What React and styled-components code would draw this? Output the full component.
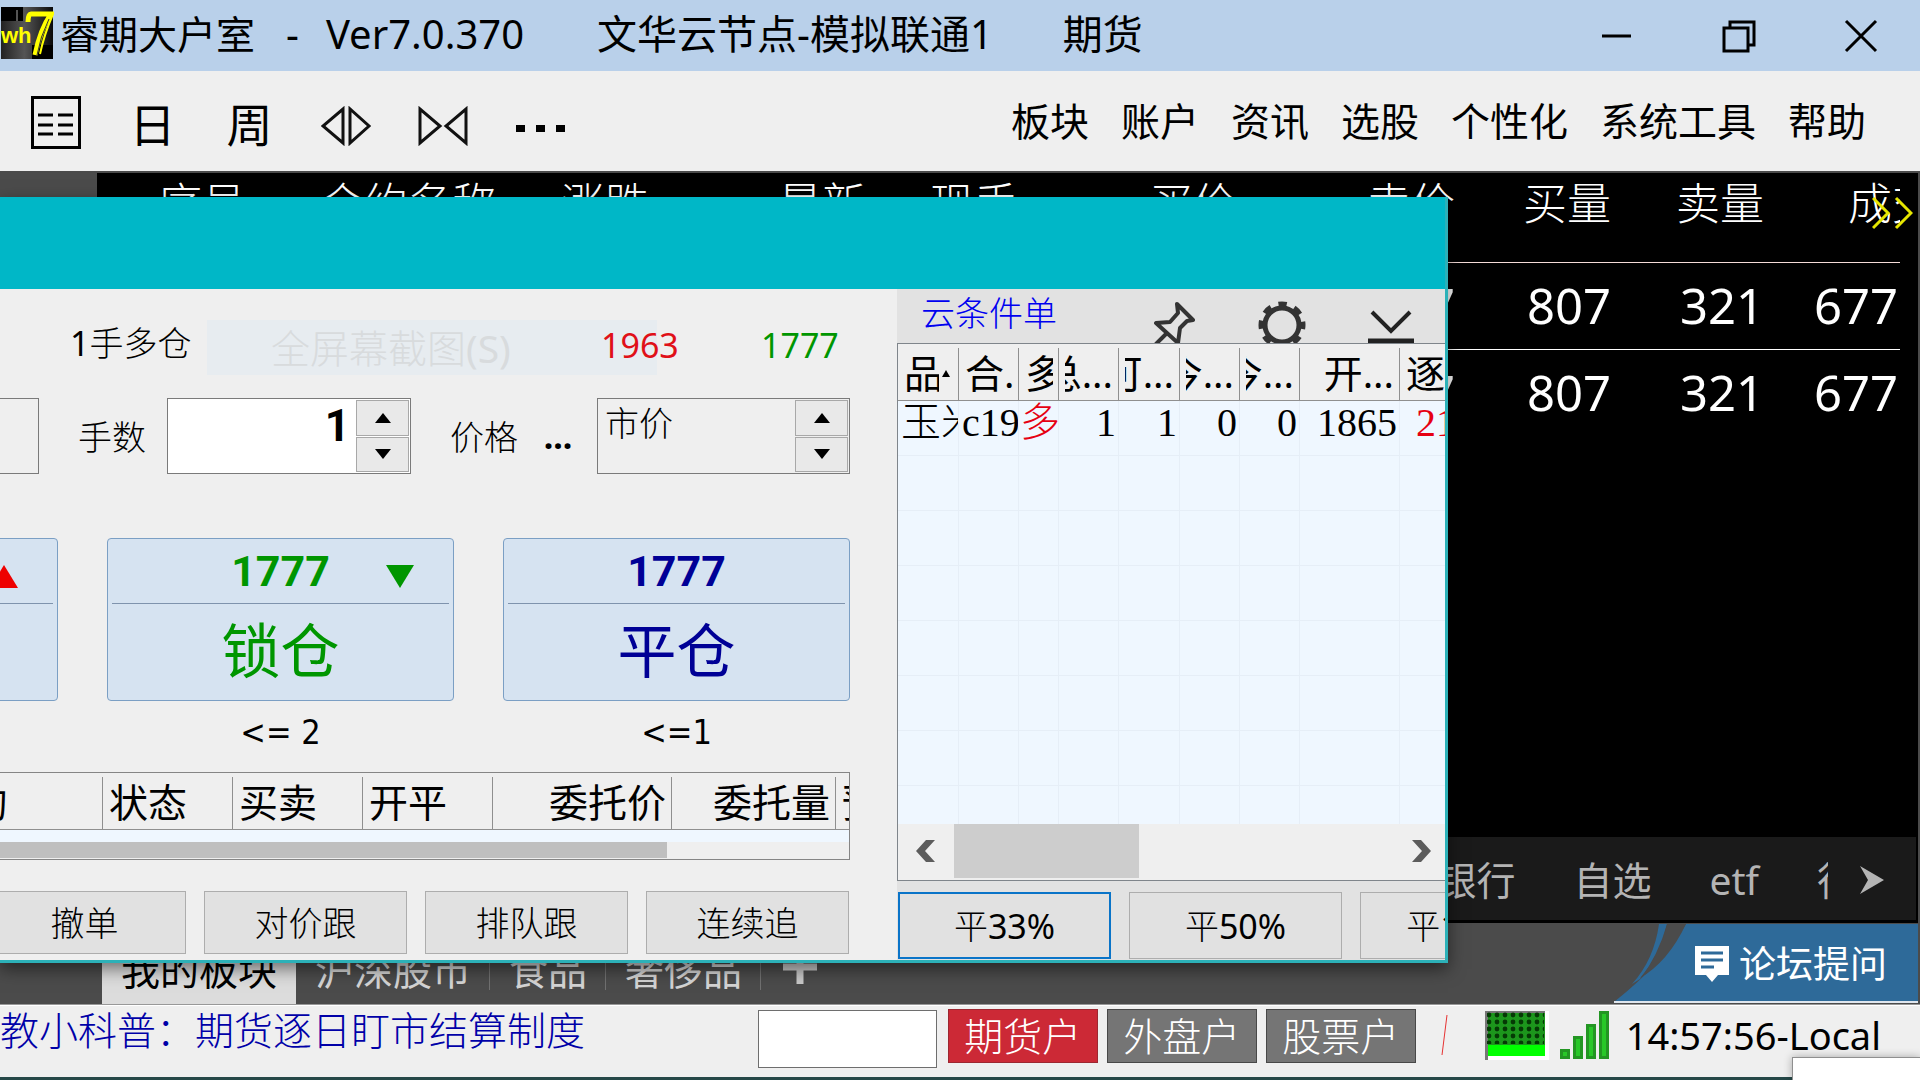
import React, { useState } from "react";
import styled, { createGlobalStyle } from "styled-components";

const GlobalStyle = createGlobalStyle`
  * {
    box-sizing: border-box;
  }

  body {
    margin: 0;
    background: #4b4b4b;
    color: #000;
    font-family: "Noto Sans", "Noto Sans CJK SC", sans-serif;
    font-size: 39px;
    line-height: 48px;
    overflow: hidden;
  }

  button, input {
    font: inherit;
    color: inherit;
    margin: 0;
    padding: 0;
    border: none;
    border-radius: 0;
    background: none;
    outline: none;
  }

  button {
    cursor: pointer;
    white-space: nowrap;
  }
`;

const light = `font-family: "Noto Sans", "Noto Sans CJK SC Light", "Noto Sans CJK SC", sans-serif; font-weight: 300;`;

const Page = styled.div`
  position: relative;
  display: flex;
  flex-direction: column;
  height: 100vh;
  overflow: hidden;
  white-space: nowrap;
`;

/* ---------- title bar ---------- */

const TitleBar = styled.header`
  display: flex;
  align-items: center;
  height: 71px;
  padding-bottom: 4px;
  background: #b9d0ea;

  > svg {
    flex: none;
    margin-right: 6px;
  }

  h1 {
    margin: 0;
    font-size: 39px;
    font-weight: 400;
  }
`;

const TitlePart = styled.span`
  margin-left: ${(p) => p.$gap}px;
  font-size: 40px;
`;

const WindowButtons = styled.div`
  display: flex;
  margin-left: auto;

  button {
    display: flex;
    align-items: center;
    justify-content: center;
    width: 122px;
    height: 71px;
    padding: 5px 0 0 3px;
  }
`;

/* ---------- toolbar ---------- */

const Toolbar = styled.nav`
  display: flex;
  align-items: center;
  justify-content: space-between;
  height: 100px;
  padding: 0 54px 0 7px;
  background: #efefef;
`;

const Tools = styled.div`
  display: flex;
`;

const ToolButton = styled.button`
  display: flex;
  align-items: center;
  justify-content: center;
  width: 97px;
  height: 100px;
  padding-top: ${(p) => p.$drop || 4}px;
  font-size: 46px;
`;

const Menu = styled.div`
  display: flex;
  gap: 32px;

  a {
    color: #000;
    text-decoration: none;
  }
`;

/* ---------- quotes ---------- */

const Main = styled.main`
  display: flex;
  flex: 1;
  min-height: 0;
  padding: 2px 2px 0 97px;
  background: #4b4b4b;
`;

const Quotes = styled.section`
  position: relative;
  display: flex;
  flex: 1;
  flex-direction: column;
  min-width: 0;
  background: #000;
  color: #fff;
`;

const QuoteTable = styled.table`
  width: calc(100% - 18px);
  margin-bottom: auto;
  table-layout: fixed;
  border-collapse: separate;
  border-spacing: 0;

  th {
    ${light}
    height: 90px;
    padding: 0;
    overflow: hidden;
    border-bottom: 1px solid #f5dcd8;
    color: #fff;
    font-size: 44px;
    line-height: 60px;
    text-align: right;
    vertical-align: top;
  }

  th:last-child {
    padding-left: 84px;
    text-align: left;
  }

  td {
    height: 87px;
    padding: 0 0 3px;
    border-bottom: 1px solid #fff;
    font-size: 49px;
    text-align: right;
  }

  td:last-child {
    padding-right: 2px;
  }

  tr:last-child td {
    border-bottom: none;
  }
`;

const MoreColumns = styled.svg`
  position: absolute;
  top: 23px;
  right: 5px;
`;

const SectorBar = styled.div`
  display: flex;
  align-items: center;
  justify-content: flex-end;
  height: 83px;
  margin: 0 2px 3px 0;
  padding: 3px 31px 0 0;
  background: #1a1a1a;
  color: #b4b4b4;

  button {
    margin-right: 58px;
  }
`;

const ClippedTab = styled.span`
  width: 11px;
  margin-right: 31px;
  overflow: hidden;
`;

const BottomTabs = styled.div`
  display: flex;
  align-items: stretch;
  height: 82px;
  padding-left: 102px;
  background: #4b4b4b;
  border-bottom: 1px solid #989898;
  color: #d4d4d4;
`;

const BottomTab = styled.button`
  display: flex;
  align-items: flex-start;
  padding: 23px 19px 0;
  background: ${(p) => (p.$active ? "#dcdcdc" : "transparent")};
  color: ${(p) => (p.$active ? "#000" : "#d4d4d4")};

  &::after {
    content: "";
    display: ${(p) => (p.$active ? "none" : "block")};
    width: 1px;
    height: 44px;
    margin: 0 -19px 0 18px;
    background: #717171;
  }
`;

const AddTab = styled.button`
  display: flex;
  padding: 27px 0 0 22px;
`;

const ForumLink = styled.a`
  position: relative;
  display: flex;
  align-items: center;
  gap: 9px;
  width: 304px;
  height: 79px;
  margin: 1px 2px 0 auto;
  padding-left: 80px;
  color: #fff;
  font-size: 37px;
  text-decoration: none;

  > svg, span {
    z-index: 1;
    flex: none;
  }

  > svg:first-child {
    position: absolute;
    inset: 0;
    z-index: 0;
  }
`;

/* ---------- status bar ---------- */

const StatusBar = styled.footer`
  display: flex;
  align-items: flex-start;
  justify-content: space-between;
  height: 75px;
  padding: 4px 39px 0 0;
  background: #efefef;
  border-top: 1px solid #fff;
  border-bottom: 3px solid #264848;
`;

const News = styled.a`
  ${light}
  color: #0000a8;
  line-height: 40px;
  text-decoration: none;
`;

const StatusGroup = styled.div`
  display: flex;
  align-items: flex-start;
`;

const CodeInput = styled.input`
  width: 179px;
  height: 58px;
  margin: 0 11px 0 0;
  background: #fff;
  border: 1px solid #6e6e6e;
`;

const AccountButton = styled.button`
  ${light}
  width: 150px;
  height: 54px;
  margin: -1px 9px 0 0;
  background: ${(p) => (p.$active ? "#cc2936" : "#757575")};
  border: 1px solid ${(p) => (p.$active ? "#9c2731" : "#484848")};
  color: #fff;
`;

const Indicators = styled.div`
  display: flex;
  align-items: flex-start;
  gap: 11px;
  margin-right: 16px;
  padding-top: 1px;
`;

const Clock = styled.time`
  padding-top: 1px;
  font-size: 38px;
`;

const Popup = styled.div`
  position: absolute;
  right: 0;
  bottom: 0;
  width: 128px;
  height: 23px;
  background: #fff;
  border: solid #8f8f8f;
  border-width: 1px 0 0 1px;
  box-shadow: 0 0 8px rgba(0, 0, 0, 0.3);
`;

/* ---------- order window ---------- */

const WindowFrame = styled.div`
  position: absolute;
  top: 197px;
  left: 0;
  width: 1448px;
  box-shadow: 0 6px 16px rgba(0, 0, 0, 0.5);
`;

const OrderWindow = styled.section`
  display: flex;
  flex-direction: column;
  overflow: hidden;
  background: #efefef;
  border: solid #2cb1b8;
  border-width: 0 3px 3px 0;
`;

const WindowHead = styled.div`
  height: 92px;
  background: #00b7c7;
`;

const WindowBody = styled.div`
  display: flex;
  height: 671px;
`;

const OrderPane = styled.div`
  ${light}
  display: flex;
  flex: none;
  flex-direction: column;
  width: 897px;
  padding-right: 47px;
  overflow: hidden;
  font-size: 34px;
`;

const PositionRow = styled.div`
  display: flex;
  align-items: center;
  height: 109px;
  padding-left: 70px;
  font-weight: 400;

  > span:first-child {
    width: 124px;
    padding-bottom: 2px;
  }
`;

const Ghost = styled.span`
  display: flex;
  flex: none;
  align-items: center;
  width: 450px;
  height: 55px;
  margin: 8px -56px 0 13px;
  padding-left: 64px;
  background: #e7ecf0;
  color: #d8dbdd;
  font-size: 39px;
`;

const Price = styled.span`
  width: 76px;
  margin: 3px ${(p) => p.$gap}px 0 0;
  color: ${(p) => p.$color};
`;

const InputRow = styled.div`
  display: flex;
  align-items: center;
  height: 76px;

  label {
    flex: none;
    width: 68px;
    padding-top: 1px;
  }
`;

const BoxEnd = styled.div`
  flex: none;
  width: 39px;
  height: 76px;
  margin-right: 39px;
  border: 1px solid #7a7a7a;
  border-left: none;
`;

const SpinBox = styled.div`
  display: flex;
  flex: none;
  width: ${(p) => p.$width}px;
  height: 76px;
  padding: 1px;
  background: ${(p) => (p.$white ? "#fff" : "#efefef")};
  border: 1px solid #7a7a7a;

  input {
    flex: 1;
    min-width: 0;
    height: ${(p) => (p.$white ? 52 : 46)}px;
    padding: 0 6px;
    text-align: ${(p) => (p.$white ? "right" : "left")};
    font-family: ${(p) => (p.$white ? "Roboto, sans-serif" : "inherit")};
    font-size: ${(p) => (p.$white ? 44 : 34)}px;
    font-weight: ${(p) => (p.$white ? 700 : 300)};
  }
`;

const LotsField = styled.div`
  margin: 0 39px 0 21px;
`;

const Arrows = styled.div`
  display: flex;
  flex-direction: column;
  gap: 1px;
  width: 53px;

  button {
    display: flex;
    flex: 1;
    align-items: center;
    justify-content: center;
    background: #e9e9e9;
    border: 1px solid #a8a8a8;
  }
`;

const DotsButton = styled.button`
  width: 36px;
  margin: 0 21px 0 22px;
  font-weight: 700;
`;

const TradeRow = styled.div`
  display: flex;
  justify-content: flex-end;
  gap: 49px;
  margin-top: 64px;
`;

const TradeColumn = styled.div`
  flex: none;
  width: 347px;
  text-align: center;
`;

const TradeButton = styled.button`
  position: relative;
  display: flex;
  flex-direction: column;
  width: 100%;
  height: 163px;
  padding: 0 4px;
  background: #d6e3f1;
  border: 1px solid #7b9fc4;
  border-radius: 4px;
  color: ${(p) => p.$color};

  strong {
    width: 100%;
    height: 65px;
    border-bottom: 1px solid #7f93ad;
    font-family: Roboto, sans-serif;
    font-size: 43px;
    font-weight: 700;
    line-height: 64px;
  }

  span {
    width: 100%;
    font-family: "Noto Sans CJK SC", sans-serif;
    font-size: 59px;
    font-weight: 400;
    line-height: 88px;
  }

  svg {
    position: absolute;
    top: 26px;
    right: 39px;
  }
`;

const Limit = styled.div`
  height: 71px;
  padding-top: 7px;
  font-family: "DejaVu Sans Condensed", "Noto Sans", sans-serif;
  font-weight: 400;
`;

const OrderList = styled.div`
  height: 88px;
  border: solid #858585;
  border-width: 1px 1px 1px 0;
  background: #efefef;
  overflow: hidden;
`;

const OrderTable = styled.table`
  width: 980px;
  table-layout: fixed;
  border-collapse: separate;
  border-spacing: 0;

  th {
    height: 57px;
    padding: 2px 6px 0;
    background: linear-gradient(#8f8f8f, #8f8f8f) right 4px / 1px 52px no-repeat;
    border-bottom: 1px solid #8f8f8f;
    font-family: "Noto Sans", "Noto Sans CJK SC", sans-serif;
    font-size: 39px;
    font-weight: 400;
    text-align: left;
    overflow: hidden;
  }

  th:first-child {
    text-indent: -37px;
  }

  th:nth-child(5), th:nth-child(6) {
    text-align: right;
  }

  td {
    height: 12px;
    padding: 0;
    background: #eff7ff;
  }
`;

const ThinScroll = styled.div`
  height: 16px;

  div {
    width: 667px;
    height: 16px;
    background: #bfbfbf;
  }
`;

const ActionRow = styled.div`
  display: flex;
  justify-content: flex-end;
  gap: 18px;
  margin-top: 31px;
  padding-right: 1px;
`;

const PushButton = styled.button`
  flex: none;
  width: ${(p) => p.$width}px;
  height: ${(p) => p.$height}px;
  background: #e1e1e1;
  border: ${(p) => (p.$focused ? "2px solid #0a74c8" : "1px solid #adadad")};
  font-size: 34px;
  font-weight: 400;
`;

const CloudPane = styled.div`
  display: flex;
  flex: 1;
  flex-direction: column;
  min-width: 0;
  background: #e2e2e2;
  overflow: hidden;
`;

const CloudHead = styled.div`
  ${light}
  display: flex;
  align-items: flex-start;
  height: 54px;
  padding-left: 24px;
  overflow: hidden;
  color: #0000f0;
  font-size: 34px;

  button {
    width: 60px;
    height: 54px;
    margin-right: 49px;
  }

  button:first-of-type {
    margin-left: 88px;
    margin-right: 47px;
  }

  button:last-of-type {
    margin-right: 0;
  }
`;

const CloudList = styled.div`
  height: 538px;
  border: solid #7f858b;
  border-width: 1px 0 1px 1px;
  background: #efefef;
  overflow: hidden;
`;

const CloudTableBox = styled.div`
  height: 480px;
  overflow: hidden;
  background: #eff7ff;
`;

const CloudTable = styled.table`
  width: 602px;
  table-layout: fixed;
  border-collapse: separate;
  border-spacing: 0;

  th {
    height: 57px;
    padding: 2px 6px 0;
    background: #efefef linear-gradient(#8f8f8f, #8f8f8f) right 4px / 1px 52px no-repeat;
    border-bottom: 1px solid #8f8f8f;
    font-size: 39px;
    font-weight: 400;
  }

  td {
    height: 55px;
    padding: 0 2px;
    border: solid #e6eef7;
    border-width: 0 1px 1px 0;
    font-family: "Liberation Serif", "Noto Sans CJK SC Light", "Noto Sans CJK SC", serif;
    font-size: 40px;
    font-weight: 300;
    line-height: 44px;
    text-align: right;
    vertical-align: top;
    overflow: hidden;
  }
`;

const HeadText = styled.div`
  display: flex;
  align-items: center;
  justify-content: ${(p) => (p.$right ? "flex-end" : "flex-start")};
  overflow: hidden;
`;

const SortMark = styled.i`
  flex: none;
  margin-left: 3px;
  border: 4px solid transparent;
  border-top: none;
  border-bottom: 7px solid #000;
`;

const Glyph = styled.b`
  flex: none;
  width: ${(p) => p.$width}px;
  overflow: hidden;
  font-weight: 400;
`;

const Cell = styled.td`
  && {
    color: ${(p) => p.$color || "#000"};
    text-align: ${(p) => p.$align || "right"};
    padding-left: ${(p) => p.$indent || 3}px;
  }
`;

const WideScroll = styled.div`
  display: flex;
  align-items: flex-start;
  height: 56px;

  button {
    display: flex;
    align-items: center;
    justify-content: center;
    width: 56px;
    height: 54px;
  }

  button:last-child {
    width: 48px;
  }

  div {
    width: 185px;
    height: 54px;
    margin-right: auto;
    background: #cdcdcd;
  }
`;

const CloudActions = styled.div`
  ${light}
  display: flex;
  gap: 18px;
  padding: 11px 0 0 1px;
`;

/* ---------- drawings ---------- */

const Logo = () => (
  <svg width="54" height="53" viewBox="0 0 54 53" aria-hidden="true">
    <defs>
      <linearGradient id="logoBg">
        <stop offset="0" stopColor="#222" />
        <stop offset="0.45" stopColor="#555" />
        <stop offset="1" stopColor="#0a0a0a" />
      </linearGradient>
    </defs>
    <rect x="1" width="52" height="52" fill="url(#logoBg)" />
    <path d="M1 0h22v14H1zM32 38h21v14H32z" fill="#000" />
    <path d="M17 3v11" stroke="#555" strokeWidth="2" />
    <text x="1" y="36" fill="#ff0" fontFamily="Liberation Sans" fontSize="22" fontWeight="700">wh</text>
    <path d="M28 15q0-8 3-8h20q-11 16-16 41" fill="none" stroke="#ff0" strokeWidth="5" />
    <path d="M53 7Q44 28 40 47" fill="none" stroke="#ff0" strokeWidth="2" />
    <path d="M49 12Q40 30 37 48" fill="none" stroke="#333" strokeWidth="1" />
  </svg>
);

const ListIcon = () => (
  <svg width="50" height="54" viewBox="0 0 50 54" fill="none" stroke="#000" aria-hidden="true">
    <rect x="1.5" y="1.5" width="47" height="50" strokeWidth="3" />
    <path d="M7 19h15M27 19h15M7 29h15M27 29h15M7 38h15M27 38h15" strokeWidth="3" />
  </svg>
);

const SpreadIcon = () => (
  <svg width="52" height="40" viewBox="0 0 52 40" fill="none" stroke="#111" strokeWidth="3" aria-hidden="true">
    <path d="M22 3v34L2 20zM29 3v34l19-17z" />
  </svg>
);

const SqueezeIcon = () => (
  <svg width="52" height="40" viewBox="0 0 52 40" fill="none" stroke="#111" strokeWidth="3" aria-hidden="true">
    <path d="M2 3v34l20-17zM48 3v34L28 20z" />
  </svg>
);

const MoreIcon = () => (
  <svg width="50" height="8" viewBox="0 0 50 8" aria-hidden="true">
    <path d="M0 0h9v7H0zM20 0h9v7h-9zM40 0h9v7h-9z" />
  </svg>
);

const PinIcon = () => (
  <svg width="48" height="54" viewBox="0 0 48 54" fill="none" stroke="#333" strokeWidth="4" aria-hidden="true">
    <path d="M26 15 42 31 36 32 29 39 27 54 5 34 19 33 27 24z" strokeLinejoin="round" />
    <path d="M16 44 2 58" />
  </svg>
);

const GearIcon = () => (
  <svg width="50" height="60" viewBox="0 0 50 60" fill="none" stroke="#333" aria-hidden="true">
    <circle cx="25" cy="36" r="20" strokeWidth="7" strokeDasharray="8 7.7" strokeDashoffset="4" />
    <circle cx="25" cy="36" r="17" strokeWidth="5" />
  </svg>
);

const CollapseIcon = () => (
  <svg width="48" height="54" viewBox="0 0 48 54" fill="none" stroke="#222" aria-hidden="true">
    <path d="M5 23 24 42 43 23" strokeWidth="4" />
    <path d="M1 52h46" strokeWidth="5" />
  </svg>
);

const SlashIcon = () => (
  <svg width="49" height="54" stroke="#e63232" strokeWidth="1" aria-hidden="true">
    <path d="M22 4 17 44" />
  </svg>
);

const GridIcon = () => (
  <svg width="64" height="50" viewBox="0 0 64 50" aria-hidden="true">
    <defs>
      <pattern id="dots" width="8" height="7" patternUnits="userSpaceOnUse">
        <circle cx="4" cy="4" r="2.4" fill="#053a05" />
      </pattern>
    </defs>
    <rect width="64" height="49" fill="#fff" />
    <path d="M0 0h60v3H3v46H0z" fill="#777" />
    <rect x="3" y="2" width="57" height="32" fill="#1c961c" />
    <rect x="2" y="1" width="57" height="32" fill="url(#dots)" />
    <rect x="3" y="34" width="57" height="11" fill="#0f0" />
  </svg>
);

const SignalIcon = () => (
  <svg width="50" height="48" viewBox="0 0 50 48" fill="#28c828" stroke="#239623" strokeWidth="3" aria-hidden="true">
    <path d="M1.5 39.5h7v7h-7zM14.5 26.5h7v20h-7zM27.5 14.5h7v32h-7zM40.5 1.5h7v45h-7z" />
  </svg>
);

const Triangle = ({ up, color, width = 16, height = 10 }) => (
  <svg width={width} height={height} viewBox="0 0 16 10" preserveAspectRatio="none" fill={color || "#000"} aria-hidden="true">
    <path d={up ? "M8 0 16 10H0z" : "M0 0h16L8 10z"} />
  </svg>
);

const Chevron = ({ left }) => (
  <svg width="20" height="22" viewBox="0 0 20 22" fill="#5c5c5c" aria-hidden="true">
    <path d={left ? "M10 0h9L9 11l10 11h-9L0 11z" : "M10 0H1l10 11L1 22h9l10-11z"} />
  </svg>
);

/* ---------- data ---------- */

const menu = ["板块", "账户", "资讯", "选股", "个性化", "系统工具", "帮助"];

const quoteColumns = [
  ["序号", 149],
  ["合约名称", 250],
  ["涨跌", 153],
  ["最新", 217],
  ["现手", 152],
  ["买价", 219],
  ["卖价", 218],
  ["买量", 156],
  ["卖量", 153],
  ["成交", 136],
];

const quoteRows = [
  ["", "", "", "", "", "", "1777", "807", "321", "677"],
  ["", "", "", "", "", "", "1777", "807", "321", "677"],
];

const trades = [
  { name: "", price: "", limit: "", color: "#e00", up: true },
  { name: "锁仓", price: "1777", limit: "<= 2", color: "#009600", down: true },
  { name: "平仓", price: "1777", limit: "<=1", color: "#000096" },
];

const orderColumns = [["约", 103], ["状态", 130], ["买卖", 130], ["开平", 130], ["委托价", 179], ["委托量", 164], ["预", 144]];

const cloudColumns = [61, 60, 40, 60, 61, 60, 60, 100, 100];

const cloudRow = [
  { text: "玉米", align: "left" },
  { text: "c19", align: "left" },
  { text: "多", align: "left", color: "#e60012", indent: 1 },
  { text: "1" },
  { text: "1" },
  { text: "0" },
  { text: "0" },
  { text: "1865" },
  { text: "21", align: "left", color: "#e60012", indent: 16 },
];

function Spinner({ id, value, width, white }) {
  const [text, setText] = useState(value);
  const step = (n) => {
    if (!isNaN(Number(text))) setText(String(Number(text) + n));
  };

  return (
    <SpinBox $width={width} $white={white}>
      <input id={id} value={text} onChange={(e) => setText(e.target.value)} />
      <Arrows>
        <button aria-label="加" onClick={() => step(1)}><Triangle up /></button>
        <button aria-label="减" onClick={() => step(-1)}><Triangle /></button>
      </Arrows>
    </SpinBox>
  );
}

function OrderPanel() {
  return (
    <OrderPane>
      <PositionRow>
        <span>1手多仓</span>
        <Ghost>全屏幕截图(S)</Ghost>
        <Price $color="#e01018" $gap={84}>1963</Price>
        <Price $color="#009600" $gap={0}>1777</Price>
      </PositionRow>

      <InputRow>
        <BoxEnd />
        <label htmlFor="lots">手数</label>
        <LotsField>
          <Spinner id="lots" value="1" width={244} white />
        </LotsField>
        <label htmlFor="price">价格</label>
        <DotsButton aria-label="选择价格">...</DotsButton>
        <Spinner id="price" value="市价" width={253} />
      </InputRow>

      <TradeRow>
        {trades.map((t, index) => (
          <TradeColumn key={index}>
            <TradeButton $color={t.color} aria-label={t.name || "开仓"}>
              <strong>{t.price}</strong>
              <span>{t.name}</span>
              {(t.up || t.down) && <Triangle up={t.up} color={t.color} width={28} height={23} />}
            </TradeButton>
            <Limit>{t.limit}</Limit>
          </TradeColumn>
        ))}
      </TradeRow>

      <OrderList>
        <OrderTable>
          <colgroup>
            {orderColumns.map(([name, width]) => <col key={name} width={width} />)}
          </colgroup>
          <thead>
            <tr>{orderColumns.map(([name]) => <th key={name}>{name}</th>)}</tr>
          </thead>
          <tbody>
            <tr>{orderColumns.map(([name]) => <td key={name} />)}</tr>
          </tbody>
        </OrderTable>
        <ThinScroll><div /></ThinScroll>
      </OrderList>

      <ActionRow>
        {["撤单", "对价跟", "排队跟", "连续追"].map((name) => (
          <PushButton key={name} $width={203} $height={63}>{name}</PushButton>
        ))}
      </ActionRow>
    </OrderPane>
  );
}

function CloudPanel() {
  return (
    <CloudPane>
      <CloudHead>
        <span>云条件单</span>
        <button aria-label="固定"><PinIcon /></button>
        <button aria-label="设置"><GearIcon /></button>
        <button aria-label="收起"><CollapseIcon /></button>
      </CloudHead>

      <CloudList>
        <CloudTableBox>
          <CloudTable>
            <colgroup>
              {cloudColumns.map((width, index) => <col key={index} width={width} />)}
            </colgroup>
            <thead>
              <tr>
                <th><HeadText><Glyph $width={35}>品</Glyph><SortMark /></HeadText></th>
                <th><HeadText>合.</HeadText></th>
                <th><HeadText><Glyph $width={28}>多</Glyph></HeadText></th>
                <th><HeadText $right>总...</HeadText></th>
                <th><HeadText $right>可...</HeadText></th>
                <th><HeadText $right>今...</HeadText></th>
                <th><HeadText $right>今...</HeadText></th>
                <th><HeadText $right>开...</HeadText></th>
                <th><HeadText>逐</HeadText></th>
              </tr>
            </thead>
            <tbody>
              <tr>
                {cloudRow.map((c, index) => (
                  <Cell key={index} $align={c.align} $color={c.color} $indent={c.indent}>{c.text}</Cell>
                ))}
              </tr>
              {[1, 2, 3, 4, 5, 6, 7].map((row) => (
                <tr key={row}>{cloudColumns.map((_, index) => <td key={index} />)}</tr>
              ))}
            </tbody>
          </CloudTable>
        </CloudTableBox>
        <WideScroll>
          <button aria-label="向左"><Chevron left /></button>
          <div />
          <button aria-label="向右"><Chevron /></button>
        </WideScroll>
      </CloudList>

      <CloudActions>
        <PushButton $width={213} $height={67} $focused>平33%</PushButton>
        <PushButton $width={213} $height={67}>平50%</PushButton>
        <PushButton $width={213} $height={67}>平100%</PushButton>
      </CloudActions>
    </CloudPane>
  );
}

function App() {
  return (
    <>
      <GlobalStyle />
      <Page>
        <TitleBar>
          <Logo />
          <h1>睿期大户室</h1>
          <TitlePart $gap={31}>-</TitlePart>
          <TitlePart $gap={27}>Ver7.0.370</TitlePart>
          <TitlePart $gap={73}>文华云节点-模拟联通1</TitlePart>
          <TitlePart $gap={70}>期货</TitlePart>
          <WindowButtons>
            <button aria-label="最小化">
              <svg width="30" height="34"><path d="M0 17h29" stroke="#000" strokeWidth="3" /></svg>
            </button>
            <button aria-label="还原">
              <svg width="34" height="34" fill="none" stroke="#000" strokeWidth="3">
                <path d="M2 9h24v23H2zM8 9V3h24v23h-6" />
              </svg>
            </button>
            <button aria-label="关闭">
              <svg width="34" height="34"><path d="M2 2l30 30M32 2 2 32" stroke="#000" strokeWidth="3" /></svg>
            </button>
          </WindowButtons>
        </TitleBar>

        <Toolbar>
          <Tools>
            <ToolButton aria-label="列表"><ListIcon /></ToolButton>
            <ToolButton $drop={6}>日</ToolButton>
            <ToolButton $drop={6}>周</ToolButton>
            <ToolButton $drop={10} aria-label="放大"><SpreadIcon /></ToolButton>
            <ToolButton $drop={10} aria-label="缩小"><SqueezeIcon /></ToolButton>
            <ToolButton $drop={16} aria-label="更多"><MoreIcon /></ToolButton>
          </Tools>
          <Menu>
            {menu.map((name) => <a href="#" key={name}>{name}</a>)}
          </Menu>
        </Toolbar>

        <Main>
          <Quotes>
            <QuoteTable>
              <colgroup>
                {quoteColumns.map(([name, width]) => <col key={name} width={width} />)}
              </colgroup>
              <thead>
                <tr>{quoteColumns.map(([name]) => <th key={name}>{name}</th>)}</tr>
              </thead>
              <tbody>
                {quoteRows.map((row, index) => (
                  <tr key={index}>{row.map((value, i) => <td key={i}>{value}</td>)}</tr>
                ))}
              </tbody>
            </QuoteTable>
            <MoreColumns width="41" height="34" fill="none" stroke="#e6e600" strokeWidth="3" aria-hidden="true">
              <path d="M1 2l15 15L1 32M24 2l15 15-15 15" />
            </MoreColumns>
            <SectorBar>
              <button>银行</button>
              <button>自选</button>
              <button>etf</button>
              <ClippedTab>行</ClippedTab>
              <svg width="26" height="30" fill="#b4b4b4" aria-hidden="true">
                <path d="M1 1l24 14L1 29l8-14z" />
              </svg>
            </SectorBar>
          </Quotes>
        </Main>

        <BottomTabs>
          <BottomTab $active>我的板块</BottomTab>
          <BottomTab>沪深股市</BottomTab>
          <BottomTab>食品</BottomTab>
          <BottomTab>奢侈品</BottomTab>
          <AddTab aria-label="新增">
            <svg width="34" height="34" stroke="#c8c8c8" strokeWidth="7">
              <path d="M17 0v34M0 17h34" />
            </svg>
          </AddTab>
          <ForumLink href="#">
            <svg width="304" height="79" viewBox="0 0 304 79" aria-hidden="true">
              <path d="M0 78Q48 40 72 0H304V78Z" fill="#2e6a99" />
              <path d="M45 0Q40 36 18 60L26 55Q44 32 53 0Z" fill="#2e6a99" />
              <path d="M53 0h19Q54 38 26 54 46 32 53 0z" fill="#4b4b4b" />
              <path d="M0 78h304" stroke="#dfe6ee" strokeWidth="2" />
            </svg>
            <svg width="36" height="38" viewBox="0 0 36 38" aria-hidden="true">
              <path d="M1 1h34v29H24l-6 7-6-7H1z" fill="#fff" />
              <path d="M7 8h22M7 15h22M7 22h13" stroke="#2e6a99" strokeWidth="3" />
            </svg>
            <span>论坛提问</span>
          </ForumLink>
        </BottomTabs>

        <StatusBar>
          <News href="#">教小科普：期货逐日盯市结算制度</News>
          <StatusGroup>
            <CodeInput aria-label="代码" />
            <AccountButton $active>期货户</AccountButton>
            <AccountButton>外盘户</AccountButton>
            <AccountButton>股票户</AccountButton>
            <Indicators>
              <SlashIcon />
              <GridIcon />
              <SignalIcon />
            </Indicators>
            <Clock>14:57:56-Local</Clock>
          </StatusGroup>
        </StatusBar>

        <WindowFrame>
          <OrderWindow>
            <WindowHead />
            <WindowBody>
              <OrderPanel />
              <CloudPanel />
            </WindowBody>
          </OrderWindow>
        </WindowFrame>
        <Popup />
      </Page>
    </>
  );
}

export default App;
